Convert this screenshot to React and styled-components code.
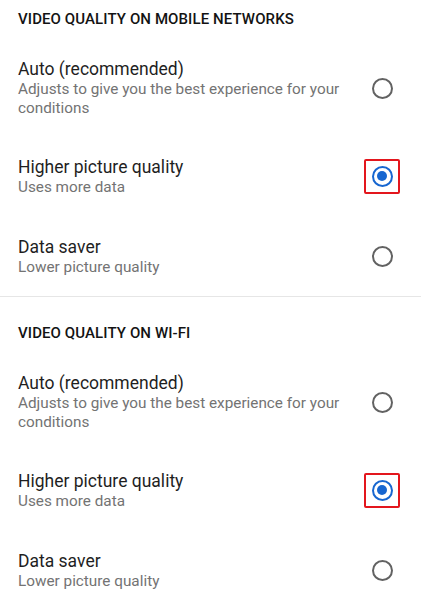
import React from "react";
import styled, { createGlobalStyle } from "styled-components";

const Global = createGlobalStyle`
  html, body { margin: 0; padding: 0; background: #ffffff; }
  body { font-family: Roboto, "Noto Sans", Arial, sans-serif; -webkit-font-smoothing: antialiased; }
`;

const Page = styled.div`
  width: 421px;
  background: #ffffff;
`;

const Section = styled.section`
  padding-top: 26px;
  border-top: 1px solid #e6e6e6;
  &:first-child {
    padding-top: 9px;
    border-top: none;
  }
`;

const Header = styled.h2`
  margin: 0;
  padding: 0 18px 11px;
  font-size: 15px;
  line-height: 20px;
  font-weight: 500;
  color: #131313;
  letter-spacing: 0.1px;
`;

const Row = styled.div`
  display: flex;
  align-items: center;
  box-sizing: border-box;
  min-height: 80px;
  padding: 18px 21px 18px 18px;
  gap: 16px;
`;

const TextCol = styled.div`
  flex: 1;
  min-width: 0;
`;

const Title = styled.div`
  font-size: 17.5px;
  line-height: 22px;
  color: #1f1f1f;
`;

const Sub = styled.div`
  font-size: 15.3px;
  line-height: 19px;
  color: #737373;
`;

const RadioBox = styled.div`
  width: 36px;
  height: 35px;
  box-sizing: border-box;
  display: flex;
  align-items: center;
  justify-content: center;
  border: 2px solid ${(p) => (p.$highlight ? "#e3161d" : "transparent")};
  border-radius: 2px;
  flex-shrink: 0;
`;

const Circle = styled.div`
  width: 21px;
  height: 21px;
  box-sizing: border-box;
  border-radius: 50%;
  border: 2.3px solid ${(p) => (p.$checked ? "#1766d0" : "#626262")};
  display: flex;
  align-items: center;
  justify-content: center;
`;

const Dot = styled.div`
  width: 10px;
  height: 10px;
  border-radius: 50%;
  background: #1766d0;
`;

const options = [
  {
    title: "Auto (recommended)",
    sub: "Adjusts to give you the best experience for your conditions",
    checked: false,
  },
  { title: "Higher picture quality", sub: "Uses more data", checked: true },
  { title: "Data saver", sub: "Lower picture quality", checked: false },
];

function Option({ title, sub, checked }) {
  return (
    <Row>
      <TextCol>
        <Title>{title}</Title>
        <Sub>{sub}</Sub>
      </TextCol>
      <RadioBox $highlight={checked}>
        <Circle $checked={checked}>{checked && <Dot />}</Circle>
      </RadioBox>
    </Row>
  );
}

export default function App() {
  return (
    <Page>
      <Global />
      <Section>
        <Header>VIDEO QUALITY ON MOBILE NETWORKS</Header>
        {options.map((o) => (
          <Option key={o.title} {...o} />
        ))}
      </Section>
      <Section>
        <Header>VIDEO QUALITY ON WI-FI</Header>
        {options.map((o) => (
          <Option key={o.title} {...o} />
        ))}
      </Section>
    </Page>
  );
}
